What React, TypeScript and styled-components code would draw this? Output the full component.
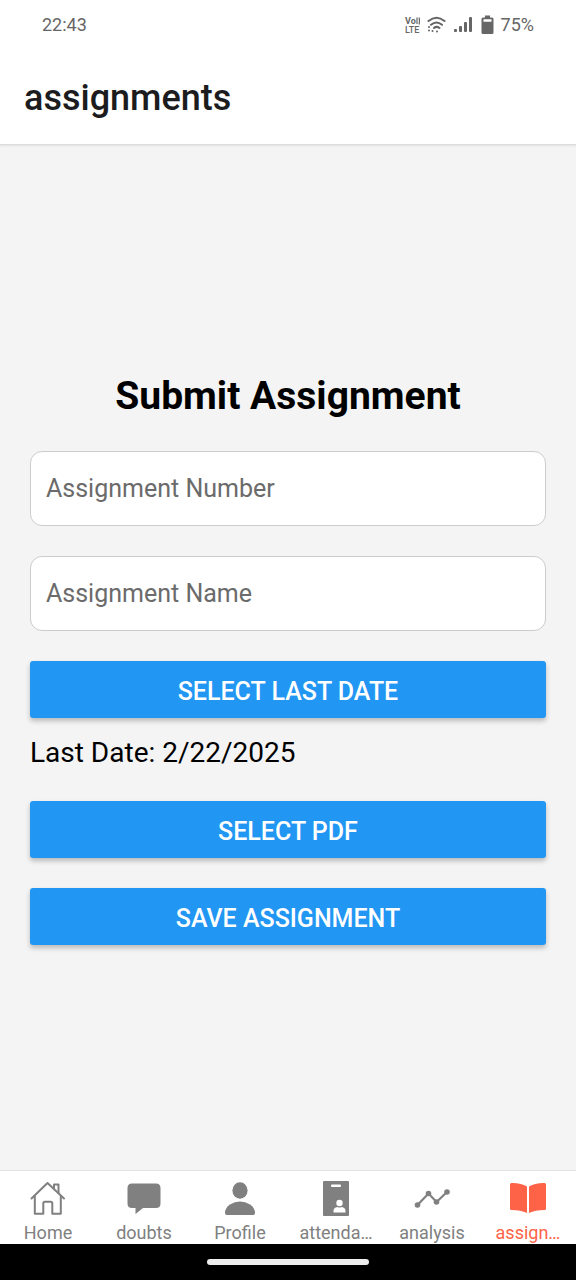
import React, { useState } from "react";
import styled, { createGlobalStyle } from "styled-components";

const GlobalStyle = createGlobalStyle`
  *, *::before, *::after { box-sizing: border-box; }
  body {
    margin: 0;
    background: #f4f4f4;
    font-family: Roboto, "Liberation Sans", sans-serif;
  }
`;

const Screen = styled.div`
  display: flex;
  flex-direction: column;
  min-height: 100vh;
`;

const Top = styled.header`
  background: #fff;
  border-bottom: 1px solid #dcdcdc;
  box-shadow: 0 1px 2px rgba(0, 0, 0, 0.08);
`;

const StatusBar = styled.div`
  display: flex;
  align-items: center;
  justify-content: space-between;
  height: 50px;
  padding: 0 42px;
  color: #666;
  font-size: 18px;
  line-height: 24px;
`;

const StatusIcons = styled.div`
  display: flex;
  align-items: center;
  gap: 7px;
`;

const PageTitle = styled.h1`
  margin: 0;
  padding: 26px 24px 24px;
  color: #1c1c1e;
  font-size: 36px;
  font-weight: 500;
  line-height: 44px;
`;

const Form = styled.form`
  flex: 1;
  display: flex;
  flex-direction: column;
  justify-content: center;
  gap: 30px;
  padding: 0 30px 2px;
`;

const FormTitle = styled.h2`
  margin: 0;
  padding-top: 2px;
  color: #000;
  font-size: 39px;
  font-weight: 700;
  line-height: 50px;
  text-align: center;
`;

const Field = styled.input`
  width: 100%;
  height: 75px;
  padding: 0 15px;
  border: 1px solid #ccc;
  border-radius: 12px;
  background: #fff;
  color: #000;
  font-family: inherit;
  font-size: 25px;
  &::placeholder { color: #6b6b6b; opacity: 1; }
`;

const DateGroup = styled.div`
  display: flex;
  flex-direction: column;
  gap: 15px;
`;

const ActionButton = styled.button`
  width: 100%;
  height: 57px;
  padding: 4px 15px 0;
  border: 0;
  border-radius: 3px;
  background: #2196f3;
  box-shadow: 0 3px 5px rgba(0, 0, 0, 0.24);
  color: #fff;
  font-family: inherit;
  font-size: 25px;
  font-weight: 500;
  text-transform: uppercase;
`;

const DateText = styled.p`
  margin: 0;
  padding-top: 2px;
  color: #000;
  font-size: 28px;
  line-height: 36px;
`;

const TabBar = styled.nav`
  display: flex;
  height: 74px;
  border-top: 1px solid #e2e2e2;
  background: #fff;
`;

const Tab = styled.a<{ $active?: boolean }>`
  flex: 1;
  display: flex;
  flex-direction: column;
  align-items: center;
  padding-top: 9px;
  gap: 6px;
  color: ${({ $active }) => ($active ? "#ff6347" : "#808080")};
  font-size: 18px;
  line-height: 22px;
  text-decoration: none;
  svg { display: block; }
`;

const SystemNav = styled.footer`
  display: flex;
  align-items: center;
  justify-content: center;
  height: 36px;
  background: #000;
`;

const HomeHandle = styled.div`
  width: 28%;
  height: 6px;
  border-radius: 3px;
  background: #eee;
`;

const VoLteIcon = () => (
  <svg width="16" height="18" viewBox="0 0 16 18" fill="#666" aria-hidden="true">
    <text x="1" y="8" fontSize="9" fontWeight="700">Vo</text>
    <text x="1" y="17" fontSize="9" fontWeight="500">LTE</text>
    <path d="M13 1.500v6.500M15 1.500q1 3.500 0 7" stroke="#666" strokeWidth="1.200" fill="none" />
  </svg>
);

const WifiIcon = () => (
  <svg width="20" height="18" viewBox="0 0 20 18" fill="none" stroke="#666" strokeWidth="2" strokeLinecap="round" aria-hidden="true">
    <path d="M1.500 5Q9.500-1.500 17.500 5M4 8.800Q9.500 4.200 15 8.800M7 12Q9.500 9.800 12.500 12" />
    <path d="M10 15.500v.1M2 11v.1M2 14.500v.1M5.500 15v.1" />
  </svg>
);

const SignalIcon = () => (
  <svg width="20" height="16" viewBox="0 0 20 16" fill="#666" aria-hidden="true">
    <rect x="0" y="12" width="3" height="3" rx="1" />
    <rect x="5" y="9" width="3" height="6" rx="1" />
    <rect x="10" y="5" width="3" height="10" rx="1" />
    <rect x="15" y="0" width="3" height="15" rx="1" />
  </svg>
);

const BatteryIcon = () => (
  <svg width="13" height="20" viewBox="0 0 13 20" aria-hidden="true">
    <path fill="#666" fillRule="evenodd" d="M4 0.500h5v2h2q1.500 0 1.500 1.500v13.500q0 1.500-1.500 1.500h-9q-1.500 0-1.500-1.500v-13.500q0-1.500 1.500-1.500h2zM2.500 4.200v2.600h8v-2.600z" />
  </svg>
);

const HomeIcon = () => (
  <svg width="36" height="36" viewBox="0 0 36 36" fill="none" stroke="currentColor" strokeWidth="2" strokeLinecap="round" strokeLinejoin="round">
    <path d="M1.500 18.500 17.500 3 34 18.500" />
    <path d="M4.800 16v17.700h8.500v-10.500q0-1.500 1.500-1.500h6q1.500 0 1.500 1.500v10.500h8.500V16" />
    <path d="M24 8.500V4.500h4.500v8.500" />
  </svg>
);

const ChatIcon = () => (
  <svg width="36" height="36" viewBox="0 0 36 36" fill="currentColor">
    <path d="M6 3.500h24q4.500 0 4.500 4.500v15.500q0 4.500-4.500 4.500H17l-7.500 6V28H6q-4.500 0-4.500-4.500V8Q1.500 3.500 6 3.500z" />
  </svg>
);

const PersonIcon = () => (
  <svg width="36" height="36" viewBox="0 0 36 36" fill="currentColor">
    <ellipse cx="18" cy="10.500" rx="7.600" ry="8.200" />
    <path d="M3 33Q3 28 8 24.500q4.500-3 10-3t10 3q5 3.500 5 8.500 0 2-1.800 2H4.800Q3 35 3 33z" />
  </svg>
);

const BadgeIcon = () => (
  <svg width="36" height="36" viewBox="0 0 36 36">
    <rect x="5" y="1" width="26" height="35" rx="1" fill="currentColor" />
    <rect x="13" y="4.500" width="10" height="2.500" rx="1" fill="#fff" />
    <circle cx="21.500" cy="23" r="3.200" fill="#fff" />
    <path fill="#fff" d="M15.500 32.500V31q0-3.500 4-4 2 1 4 0 4 .5 4 4v1.500z" />
  </svg>
);

const TrendIcon = () => (
  <svg width="36" height="36" viewBox="0 0 36 36" fill="currentColor">
    <path d="M3.500 25 14.500 13.500l8 8.500L33 12" fill="none" stroke="currentColor" strokeWidth="2.200" />
    <circle cx="3.500" cy="25" r="2.800" />
    <circle cx="14.500" cy="13.500" r="2.800" />
    <circle cx="22.500" cy="22" r="2.800" />
    <circle cx="33" cy="12" r="2.800" />
  </svg>
);

const BookIcon = () => (
  <svg width="38" height="36" viewBox="0 0 38 36" fill="currentColor">
    <path d="M18 6.500Q12 2.800 2.500 3 1 3 1 4.500v24Q1 30 2.500 30 12 30 18 33zM20 6.500Q26 2.800 35.500 3 37 3 37 4.500v24q0 1.500-1.500 1.500Q26 30 20 33z" />
  </svg>
);

const tabs = [
  { label: "Home", icon: <HomeIcon /> },
  { label: "doubts", icon: <ChatIcon /> },
  { label: "Profile", icon: <PersonIcon /> },
  { label: "attenda…", icon: <BadgeIcon /> },
  { label: "analysis", icon: <TrendIcon /> },
  { label: "assign…", icon: <BookIcon />, active: true },
];

export default function App() {
  const [number, setNumber] = useState("");
  const [name, setName] = useState("");

  return (
    <>
      <GlobalStyle />
      <Screen>
        <Top>
          <StatusBar>
            <span>22:43</span>
            <StatusIcons>
              <VoLteIcon />
              <WifiIcon />
              <SignalIcon />
              <BatteryIcon />
              <span>75%</span>
            </StatusIcons>
          </StatusBar>
          <PageTitle>assignments</PageTitle>
        </Top>
        <Form onSubmit={(e) => e.preventDefault()}>
          <FormTitle>Submit Assignment</FormTitle>
          <Field
            aria-label="Assignment Number"
            placeholder="Assignment Number"
            value={number}
            onChange={(e) => setNumber(e.target.value)}
          />
          <Field
            aria-label="Assignment Name"
            placeholder="Assignment Name"
            value={name}
            onChange={(e) => setName(e.target.value)}
          />
          <DateGroup>
            <ActionButton type="button">Select last date</ActionButton>
            <DateText>Last Date: 2/22/2025</DateText>
          </DateGroup>
          <ActionButton type="button">Select PDF</ActionButton>
          <ActionButton type="submit">Save assignment</ActionButton>
        </Form>
        <TabBar>
          {tabs.map((tab) => (
            <Tab key={tab.label} href="#" $active={tab.active} aria-current={tab.active ? "page" : undefined}>
              {tab.icon}
              <span>{tab.label}</span>
            </Tab>
          ))}
        </TabBar>
        <SystemNav>
          <HomeHandle />
        </SystemNav>
      </Screen>
    </>
  );
}
